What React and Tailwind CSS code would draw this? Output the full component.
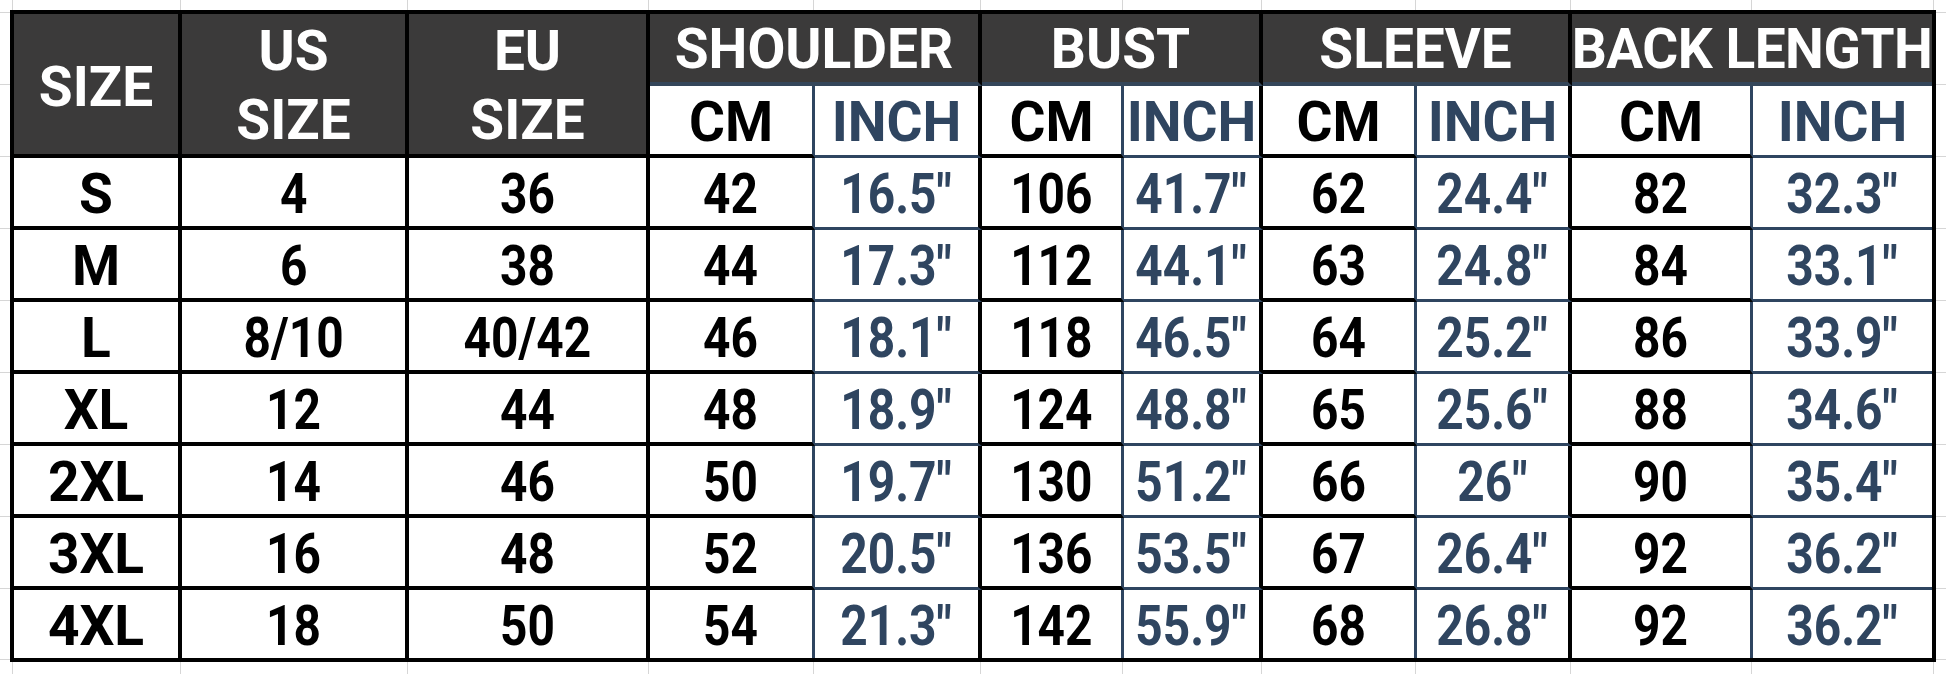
import React from "react";

const COLS = "grid-cols-[168px_227px_241px_165px_167px_142px_139px_154px_155px_181px_179px]";

const rows = [
  ["S", "4", "36", "42", '16.5"', "106", '41.7"', "62", '24.4"', "82", '32.3"'],
  ["M", "6", "38", "44", '17.3"', "112", '44.1"', "63", '24.8"', "84", '33.1"'],
  ["L", "8/10", "40/42", "46", '18.1"', "118", '46.5"', "64", '25.2"', "86", '33.9"'],
  ["XL", "12", "44", "48", '18.9"', "124", '48.8"', "65", '25.6"', "88", '34.6"'],
  ["2XL", "14", "46", "50", '19.7"', "130", '51.2"', "66", '26"', "90", '35.4"'],
  ["3XL", "16", "48", "52", '20.5"', "136", '53.5"', "67", '26.4"', "92", '36.2"'],
  ["4XL", "18", "50", "54", '21.3"', "142", '55.9"', "68", '26.8"', "92", '36.2"'],
];

const colWidths = ["w-[168px]", "w-[227px]", "w-[241px]", "w-[165px]", "w-[167px]", "w-[142px]", "w-[139px]", "w-[154px]", "w-[155px]", "w-[181px]", "w-[183px]"];

function cellClass(ci, isLastRow) {
  const isInch = ci >= 4 && ci % 2 === 0;
  const isCm = ci >= 3 && ci % 2 === 1;
  let cls = "flex items-center justify-center pt-[4px] whitespace-nowrap bg-white";
  if (ci !== 10) {
    cls += isCm ? " border-r-[3px] border-r-[#2f4560]" : " border-r-4 border-r-black";
  }
  if (!isLastRow) {
    cls += isInch ? " border-b-[3px] border-b-[#2f4560]" : " border-b-4 border-b-black";
  }
  cls += isInch ? " text-[#2f4560]" : " text-black";
  return cls;
}

function HStrip() {
  return (
    <div className="flex pl-[2px] h-full">
      {colWidths.map((w, i) => (
        <div key={i} className={w + " h-full border-l border-l-[#d6d6d6]" + (i === 10 ? " border-r border-r-[#d6d6d6]" : "")} />
      ))}
    </div>
  );
}

function VStrip() {
  return (
    <div className="flex flex-col pt-[2px] w-full">
      {Array.from({ length: 9 }).map((_, i) => (
        <div key={i} className={"h-[72px] w-full border-t border-t-[#d6d6d6]" + (i === 8 ? " border-b border-b-[#d6d6d6]" : "")} />
      ))}
    </div>
  );
}

export default function App() {
  const groups = ["SHOULDER", "BUST", "SLEEVE", "BACK LENGTH"];
  return (
    <div className="w-[1946px] h-[674px] bg-white grid grid-cols-[10px_1926px_10px] grid-rows-[10px_652px_12px] overflow-hidden font-[Roboto,sans-serif] font-bold text-[55px] leading-none">
      <div />
      <HStrip />
      <div />
      <VStrip />
      <div className={"grid " + COLS + " grid-rows-[72px_72px_72px_72px_72px_72px_72px_72px_68px] border-4 border-black"}>
        {/* header */}
        <div className="row-span-2 flex items-center justify-center pt-[6px] bg-[#3b3a3a] text-white border-r-4 border-r-black border-b-4 border-b-black">
          SIZE
        </div>
        <div className="row-span-2 flex flex-col items-center justify-center pt-[4px] bg-[#3b3a3a] text-white border-r-4 border-r-black border-b-4 border-b-black">
          <span className="leading-[69px]">US</span>
          <span className="leading-[69px]">SIZE</span>
        </div>
        <div className="row-span-2 flex flex-col items-center justify-center pt-[4px] bg-[#3b3a3a] text-white border-r-4 border-r-black border-b-4 border-b-black">
          <span className="leading-[69px]">EU</span>
          <span className="leading-[69px]">SIZE</span>
        </div>
        {groups.map((g, i) => (
          <div
            key={g}
            className={
              "col-span-2 flex items-center justify-center pt-[2px] whitespace-nowrap bg-[#3b3a3a] text-white border-b-4 border-b-[#34465a]" +
              (i < 3 ? " border-r-4 border-r-black" : " tracking-[-0.5px]")
            }
          >
            {g}
          </div>
        ))}
        {Array.from({ length: 8 }).map((_, j) => {
          const ci = j + 3;
          return (
            <div key={"sub" + j} className={cellClass(ci, false)}>
              {ci % 2 === 1 ? "CM" : "INCH"}
            </div>
          );
        })}
        {rows.map((r, ri) =>
          r.map((v, ci) => (
            <div key={ri + "-" + ci} className={cellClass(ci, ri === rows.length - 1)}>
              {ci === 0 ? v : <span className="inline-block scale-x-[0.87]">{v}</span>}
            </div>
          ))
        )}
      </div>
      <VStrip />
      <div />
      <HStrip />
      <div />
    </div>
  );
}
